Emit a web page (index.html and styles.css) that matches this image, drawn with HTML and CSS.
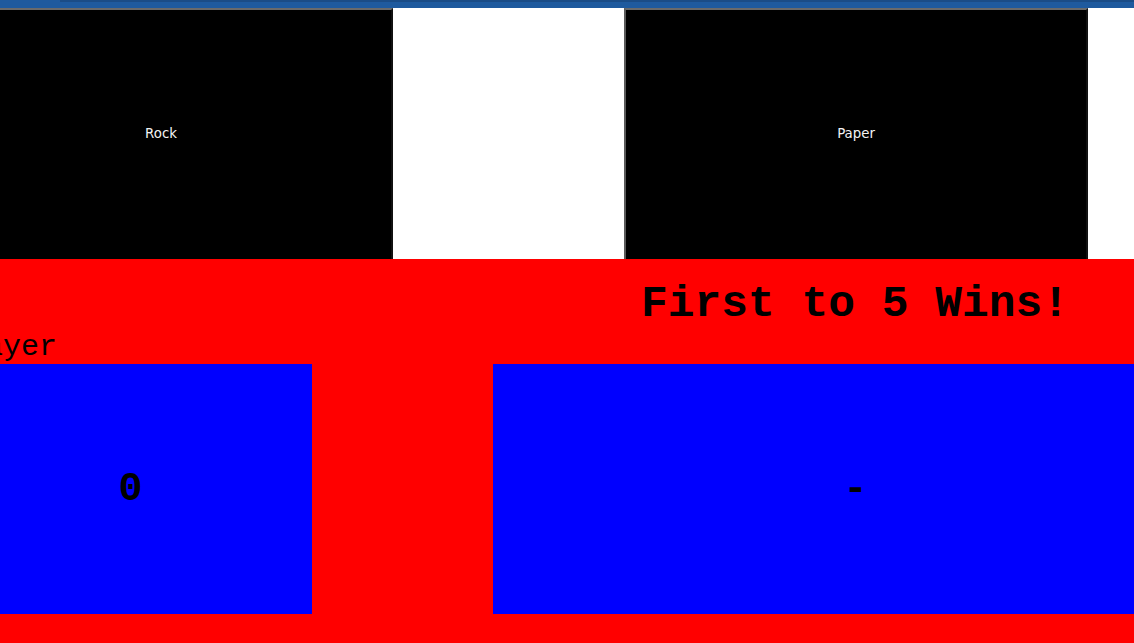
FILE: index.html
```html
<!DOCTYPE html>
<html lang="en">
<head>
<meta charset="utf-8">
<title>Rock Paper Scissors</title>
<link rel="stylesheet" href="styles.css">
</head>
<body>
  <div class="topbar"><div class="topbar-edge"></div></div>
  <div class="choices">
    <button class="choice">Rock</button>
    <button class="choice">Paper</button>
  </div>
  <section class="scoreboard">
    <div class="board">
      <h1 class="title">First to 5 Wins!</h1>
      <div class="label">Player</div>
      <div class="score">0</div>
      <div class="result">-</div>
    </div>
  </section>
</body>
</html>
```

FILE: styles.css
```css
html, body {
  margin: 0;
  padding: 0;
}

body {
  width: 1134px;
  height: 643px;
  overflow: hidden;
  background: #ffffff;
  display: flex;
  flex-direction: column;
}

.topbar {
  height: 8px;
  background: #1e5a9e;
  flex-shrink: 0;
}

.topbar-edge {
  margin-left: 60px;
  height: 2px;
  background: #1a4c86;
}

.choices {
  display: flex;
  gap: 231px;
  margin-left: -71px;
  flex-shrink: 0;
}

.choice {
  flex-shrink: 0;
  box-sizing: border-box;
  width: 464px;
  height: 251px;
  margin: 0;
  padding: 0 0 2px 0;
  background: #000000;
  color: #f4f4f4;
  font-family: "DejaVu Sans", sans-serif;
  font-size: 13.33px;
  border-style: solid;
  border-width: 2px 2px 0 2px;
  border-color: #6a6a6a #111111 #111111 #5a5a5a;
}

.scoreboard {
  flex: 1;
  background: #ff0000;
  padding-top: 20px;
}

.board {
  display: grid;
  grid-template-columns: 363px 725px;
  grid-template-rows: 51px 34px 250px;
  column-gap: 181px;
  margin-left: -51px;
  font-family: "Liberation Mono", monospace;
  color: #000000;
}

.title {
  grid-column: 2;
  grid-row: 1;
  margin: 0;
  padding-right: 1px;
  font-size: 44.6px;
  line-height: 51px;
  font-weight: bold;
  text-align: center;
}

.label {
  grid-column: 1;
  grid-row: 2;
  font-size: 30px;
  line-height: 34px;
}

.score,
.result {
  grid-row: 3;
  background: #0000ff;
  display: flex;
  align-items: center;
  justify-content: center;
  font-size: 40px;
  font-weight: bold;
}

.score {
  grid-column: 1;
}

.result {
  grid-column: 2;
}
```
